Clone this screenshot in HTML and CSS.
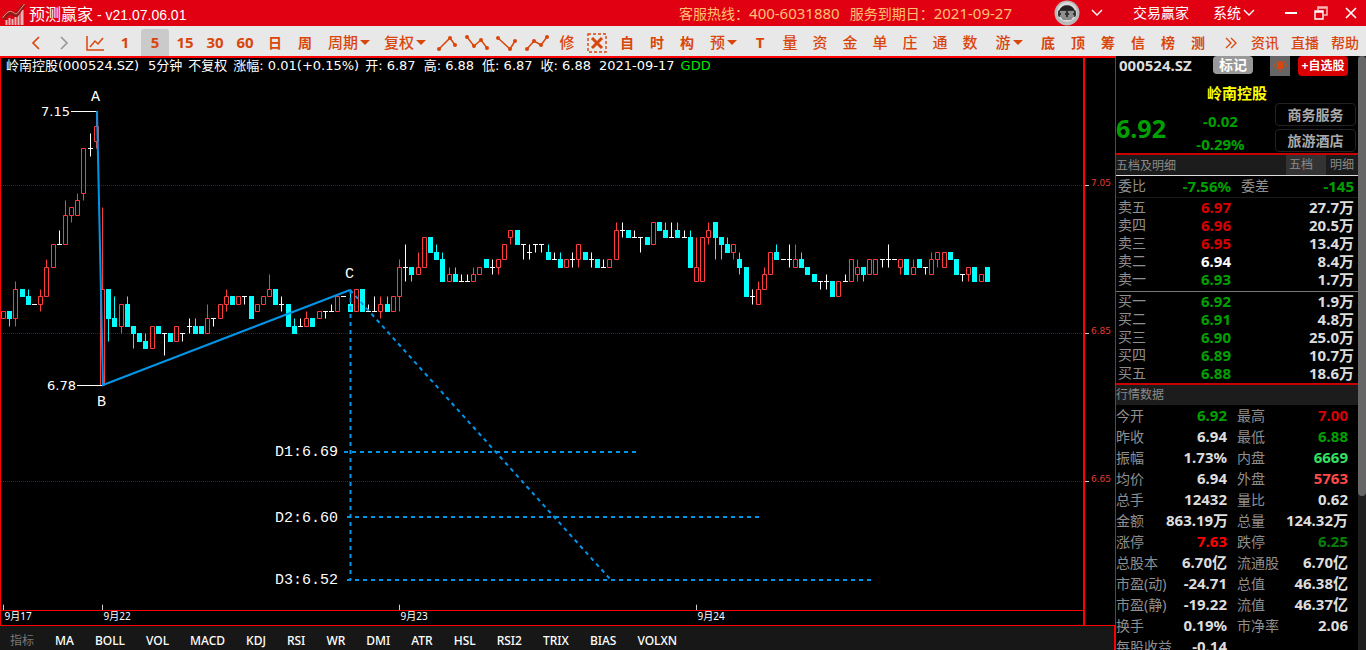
FILE: index.html
```html
<!DOCTYPE html>
<html lang="zh-CN">
<head>
<meta charset="utf-8">
<title>预测赢家</title>
<link rel="stylesheet" href="styles.css">
</head>
<body>
<div class="app">
<header class="titlebar">
  <svg class="logo" viewBox="0 0 24 26" aria-hidden="true">
    <g fill="#e9b7b7"><rect x="5" y="20" width="2" height="5"/><rect x="8" y="18" width="2" height="7"/><rect x="11" y="19" width="2" height="6"/><rect x="14" y="17" width="2" height="8"/><rect x="17" y="13" width="2" height="12"/><rect x="20" y="10" width="3" height="15"/></g>
    <path d="M3 19 Q8 11 11 13 T16 15 L23 5" fill="none" stroke="#8f1a1a" stroke-width="4"/>
    <path d="M2 18 Q8 9 12 12 T17 13 L24 4" fill="none" stroke="#ef8f86" stroke-width="1"/>
  </svg>
  <h1 class="title"><span class="title-name">预测赢家</span> - v21.07.06.01</h1>
  <p class="service"><span>客服热线：<b>400-6031880</b></span><span>服务到期日：<b>2021-09-27</b></span></p>
  <button class="avatar" aria-label="账户">
    <svg width="26" height="26" viewBox="0 0 26 26"><circle cx="13" cy="13" r="12.5" fill="#b9b9b9"/><circle cx="13" cy="12" r="10" fill="#d9d9d9"/><path d="M5 11a8.500 8.500 0 0 1 16 0z" fill="#222"/><path d="M6 16h14l-3 4H9z" fill="#888"/><rect x="4" y="10" width="18" height="7" rx="2" fill="#333"/><path d="M6 12h6M7 14h4M6 16h6M14 12h6M15 14h4M14 16h6" stroke="#eee"/></svg>
    <svg width="12" height="8" viewBox="0 0 12 8"><path d="M1 1l5 5 5-5" fill="none" stroke="#fff" stroke-width="1.4"/></svg>
  </button>
  <button class="sys trade">交易赢家</button>
  <button class="sys menu">系统<svg width="12" height="8" viewBox="0 0 12 8"><path d="M1 1l5 5 5-5" fill="none" stroke="#fff" stroke-width="1.4"/></svg></button>
  <div class="window-buttons">
    <button aria-label="最小化"><svg width="14" height="14" viewBox="0 0 14 14"><path d="M1 7h12" stroke="#fff" stroke-width="2"/></svg></button>
    <button aria-label="还原"><svg width="14" height="14" viewBox="0 0 14 14"><path d="M4 4V1h9v8h-3M4 2h9" fill="none" stroke="#f6b5b5" stroke-width="1.6"/><path d="M1 5h8v8H1zM1 6h8" fill="none" stroke="#fff" stroke-width="1.4"/></svg></button>
    <button aria-label="关闭"><svg width="14" height="14" viewBox="0 0 14 14"><path d="M2 2l10 10M12 2L2 12" stroke="#fff" stroke-width="1.6"/></svg></button>
  </div>
</header>

<nav class="toolbar">
  <button aria-label="后退"><svg width="12" height="16" viewBox="0 0 12 16"><path d="M10 2L4 8l6 6" fill="none" stroke="#d9460c" stroke-width="1.7"/></svg></button>
  <button aria-label="前进"><svg width="12" height="16" viewBox="0 0 12 16"><path d="M2 2l6 6-6 6" fill="none" stroke="#999" stroke-width="1.7"/></svg></button>
  <button aria-label="分时"><svg width="18" height="16" viewBox="0 0 18 16"><path d="M1 1v14h17M4 12l5-6 3 3 5-6" fill="none" stroke="#d9460c" stroke-width="1.5"/></svg></button>
  <button class="num">1</button>
  <button class="num active">5</button>
  <button class="num">15</button>
  <button class="num">30</button>
  <button class="num">60</button>
  <button class="strong">日</button>
  <button class="strong">周</button>
  <button class="period">周期<i class="caret"></i></button>
  <button class="adjust">复权<i class="caret"></i></button>
  <button aria-label="一笔反弹"><svg width="22" height="18" viewBox="0 0 22 18"><path d="M3 15L14 4l5 7" fill="none" stroke="#d9460c" stroke-width="1.5"/><g fill="#d9460c"><circle cx="3" cy="15" r="2"/><circle cx="14" cy="4" r="2"/><circle cx="19" cy="11" r="2"/></g></svg></button>
  <button aria-label="三笔下跌"><svg width="24" height="18" viewBox="0 0 24 18"><path d="M2 3l7 9 7-6 6 8" fill="none" stroke="#d9460c" stroke-width="1.5"/><g fill="#d9460c"><circle cx="2" cy="3" r="2"/><circle cx="9" cy="12" r="2"/><circle cx="16" cy="6" r="2"/><circle cx="22" cy="14" r="2"/></g></svg></button>
  <button aria-label="一笔回落"><svg width="22" height="18" viewBox="0 0 22 18"><path d="M2 4l12 11 5-8" fill="none" stroke="#d9460c" stroke-width="1.5"/><g fill="#d9460c"><circle cx="2" cy="4" r="2"/><circle cx="14" cy="15" r="2"/><circle cx="19" cy="7" r="2"/></g></svg></button>
  <button aria-label="三笔上涨"><svg width="24" height="18" viewBox="0 0 24 18"><path d="M2 15l7-8 7 4 6-8" fill="none" stroke="#d9460c" stroke-width="1.5"/><g fill="#d9460c"><circle cx="2" cy="15" r="2"/><circle cx="9" cy="7" r="2"/><circle cx="16" cy="11" r="2"/><circle cx="22" cy="3" r="2"/></g></svg></button>
  <button>修</button>
  <button aria-label="清除"><svg width="20" height="20" viewBox="0 0 20 20"><rect x="1" y="1" width="18" height="18" fill="none" stroke="#d9460c" stroke-width="1.4" stroke-dasharray="3 2"/><path d="M5 5l10 10M15 5L5 15" stroke="#d9460c" stroke-width="3"/></svg></button>
  <button class="strong">自</button>
  <button class="strong">时</button>
  <button class="strong">构</button>
  <button class="forecast">预<i class="caret"></i></button>
  <button class="num">T</button>
  <button>量</button>
  <button>资</button>
  <button>金</button>
  <button>单</button>
  <button>庄</button>
  <button>通</button>
  <button>数</button>
  <button class="hot">游<i class="caret"></i></button>
  <button class="strong">底</button>
  <button class="strong">顶</button>
  <button class="strong">筹</button>
  <button class="strong">信</button>
  <button class="strong">榜</button>
  <button class="strong">测</button>
  <button class="more" aria-label="更多"><svg width="12" height="12" viewBox="0 0 12 12"><path d="M1 1l5 5-5 5M6 1l5 5-5 5" fill="none" stroke="#d9460c" stroke-width="1.3"/></svg></button>
  <span class="links"><a href="#">资讯</a><a href="#">直播</a><a href="#">帮助</a></span>
</nav>

<main class="workspace">
  <div class="left">
    <section class="chart">
      <div class="plot-col">
        <div class="quote-line">
          <span class="wide">岭南控股(000524.SZ)</span><span>5分钟</span><span>不复权</span><span>涨幅: 0.01(+0.15%)</span><span class="field">开: 6.87</span><span class="field">高: 6.88</span><span class="field">低: 6.87</span><span class="field">收: 6.88</span><span>2021-09-17</span><span class="gdd">GDD</span>
        </div>
        <svg class="plot" id="plot" role="img" aria-label="5分钟K线图"></svg>
        <svg class="dates" id="dates"></svg>
      </div>
      <svg class="prices" id="prices"></svg>
    </section>
    <nav class="indicators">
      <span class="caption">指标</span>
      <button>MA</button><button>BOLL</button><button>VOL</button><button>MACD</button><button>KDJ</button><button>RSI</button><button>WR</button><button>DMI</button><button>ATR</button><button>HSL</button><button>RSI2</button><button>TRIX</button><button>BIAS</button><button>VOLXN</button>
    </nav>
  </div>

  <aside class="side">
    <div class="side-body">
      <div class="code-row">
        <strong class="code">000524.SZ</strong>
        <button class="mark">标记</button>
        <button class="bell" aria-label="提醒"><svg width="14" height="14" viewBox="0 0 14 14"><path d="M7 2c2 0 3 1 3 3v3l1 2H3l1-2V5c0-2 1-3 3-3z" fill="#d9460c"/><path d="M5.500 12h3M1 5v3M13 5v3M3 2L2 4M11 2l1 2" fill="none" stroke="#d9460c" stroke-width="1.2"/></svg></button>
        <button class="add">+自选股</button>
      </div>
      <h2 class="name">岭南控股</h2>
      <div class="summary">
        <strong class="last">6.92</strong>
        <div class="change"><b>-0.02</b><b>-0.29%</b></div>
        <div class="sectors"><button>商务服务</button><button>旅游酒店</button></div>
      </div>
      <div class="section tabs"><span>五档及明细</span><button class="on">五档</button><button>明细</button></div>
      <table class="ratio"><tr><th>委比</th><td class="green">-7.56%</td><th>委差</th><td class="green">-145</td></tr></table>
      <table class="orders">
        <tbody>
        <tr><th>卖五</th><td class="red">6.97</td><td>27.7万</td></tr>
        <tr><th>卖四</th><td class="red">6.96</td><td>20.5万</td></tr>
        <tr><th>卖三</th><td class="red">6.95</td><td>13.4万</td></tr>
        <tr><th>卖二</th><td class="white">6.94</td><td>8.4万</td></tr>
        <tr><th>卖一</th><td class="green">6.93</td><td>1.7万</td></tr>
        </tbody>
      </table>
      <table class="orders bids">
        <tbody>
        <tr><th>买一</th><td class="green">6.92</td><td>1.9万</td></tr>
        <tr><th>买二</th><td class="green">6.91</td><td>4.8万</td></tr>
        <tr><th>买三</th><td class="green">6.90</td><td>25.0万</td></tr>
        <tr><th>买四</th><td class="green">6.89</td><td>10.7万</td></tr>
        <tr><th>买五</th><td class="green">6.88</td><td>18.6万</td></tr>
        </tbody>
      </table>
      <div class="section data">行情数据</div>
      <table class="stats">
        <tr><th>今开</th><td class="green">6.92</td><th>最高</th><td class="red">7.00</td></tr>
        <tr><th>昨收</th><td>6.94</td><th>最低</th><td class="green">6.88</td></tr>
        <tr><th>振幅</th><td>1.73%</td><th>内盘</th><td class="lime">6669</td></tr>
        <tr><th>均价</th><td>6.94</td><th>外盘</th><td class="coral">5763</td></tr>
        <tr><th>总手</th><td>12432</td><th>量比</th><td>0.62</td></tr>
        <tr><th>金额</th><td>863.19万</td><th>总量</th><td>124.32万</td></tr>
        <tr><th>涨停</th><td class="bright">7.63</td><th>跌停</th><td class="dark">6.25</td></tr>
        <tr><th>总股本</th><td>6.70亿</td><th>流通股</th><td>6.70亿</td></tr>
        <tr><th>市盈(动)</th><td>-24.71</td><th>总值</th><td>46.38亿</td></tr>
        <tr><th>市盈(静)</th><td>-19.22</td><th>流值</th><td>46.37亿</td></tr>
        <tr><th>换手</th><td>0.19%</td><th>市净率</th><td>2.06</td></tr>
        <tr><th>每股收益</th><td>-0.14</td><th></th><td></td></tr>
      </table>
    </div>
    <div class="scroll"><div class="thumb"></div></div>
  </aside>
</main>
</div>
<script src="chart.js"></script>
</body>
</html>
```
FILE: styles.css
```css
* { box-sizing: border-box; }
body {
  margin: 0;
  background: #000;
  color: #fff;
  font-family: "Noto Sans", "Noto Sans CJK SC", sans-serif;
  font-size: 14px;
}
button {
  margin: 0;
  padding: 0;
  border: 0;
  background: none;
  color: inherit;
  font: inherit;
  white-space: nowrap;
}
svg { display: block; flex: none; }
.app { height: 100vh; display: flex; flex-direction: column; overflow: hidden; }

.titlebar {
  display: flex;
  align-items: center;
  flex: none;
  height: 26px;
  padding-right: 8px;
  background: #e10012;
}
.logo { width: 25px; height: 26px; margin-right: 4px; }
.title {
  margin: 0;
  padding-top: 4px;
  font: 400 14px/22px "Liberation Sans", "Noto Sans CJK SC", sans-serif;
  white-space: nowrap;
}
.title-name { font-size: 16px; }
.service {
  display: flex;
  gap: 10px;
  margin: 0 42px 0 auto;
  color: #ffc072;
  white-space: nowrap;
  line-height: 26px;
}
.service b { font-size: 15px; font-weight: 400; }
.avatar { display: flex; align-items: center; gap: 11px; margin-right: 30px; }
.sys { display: flex; align-items: center; line-height: 26px; }
.trade { margin-right: 24px; }
.menu { gap: 2px; margin-right: 29px; }
.window-buttons { display: flex; gap: 16px; }

.toolbar {
  display: flex;
  align-items: flex-end;
  gap: 2px;
  flex: none;
  height: 30px;
  padding: 0 7px 0 21px;
  background: #e8e8e8;
  color: #d9460c;
}
.toolbar button {
  display: flex;
  align-items: center;
  justify-content: center;
  flex: none;
  width: 28px;
  height: 27px;
  font-size: 15px;
  font-weight: 500;
  line-height: 27px;
}
.toolbar .num { font-weight: 700; }
.toolbar .strong { font-weight: 700; font-size: 14px; }
.toolbar .active { background: #cacaca; border-radius: 3px 3px 0 0; }
.toolbar .period { width: 56px; }
.toolbar .adjust { width: 52px; }
.toolbar .forecast { width: 41px; }
.toolbar .hot { width: 46px; }
.toolbar .more { width: 34px; }
.caret {
  margin-left: 2px;
  border: 5px solid transparent;
  border-top-color: #d9460c;
  border-bottom: 0;
}
.links { display: flex; gap: 12px; margin-left: auto; font-weight: 500; line-height: 27px; }
.links a { color: inherit; text-decoration: none; }

.workspace { display: flex; flex: 1; min-height: 0; }
.left {
  display: flex;
  flex-direction: column;
  flex: 1;
  min-width: 0;
  border-right: 1px solid #f00;
}
.chart {
  display: flex;
  flex: 1;
  min-height: 0;
  border: solid #f00;
  border-width: 2px 0 1px 1px;
}
.plot-col {
  display: flex;
  flex-direction: column;
  flex: 1;
  min-width: 0;
  border-right: 2px solid #f00;
}
.quote-line {
  display: flex;
  gap: 6px;
  flex: none;
  height: 18px;
  padding-left: 5px;
  font: 13px/16px "DejaVu Sans", "Noto Sans CJK SC", sans-serif;
  white-space: pre;
}
.quote-line .wide { margin-right: 3px; }
.quote-line .field { margin-right: 2px; }
.gdd { color: #00e600; }
.plot { width: 100%; flex: 1; min-height: 0; border-bottom: 1px solid #f00; }
.dates { width: 100%; height: 14px; overflow: visible; }
.prices { width: 30px; height: 100%; overflow: visible; }

.rise { fill: none; stroke: #ff3c3c; }
.fall { fill: #0ff; }
.fall-wick { fill: none; stroke: #0ff; }
.flat { fill: none; stroke: #fff; }
.grid { stroke: #8a0000; stroke-dasharray: 1 1; }
.tick { stroke: #ccc; }
.wave { fill: none; stroke: #0096e8; stroke-width: 2; }
.target { fill: none; stroke: #0096e8; stroke-width: 2; stroke-dasharray: 4 4; }
.price-text { fill: #fff; font: 13px "DejaVu Sans", sans-serif; }
.mono { fill: #fff; font: 15px "Liberation Mono", monospace; }
.axis-text { fill: #e03a32; font: 9px "DejaVu Sans", sans-serif; }
.date-text { fill: #fff; font: 10px "Noto Sans", "Noto Sans CJK SC", sans-serif; }

.indicators {
  display: flex;
  align-items: center;
  gap: 21px;
  flex: none;
  height: 24px;
  padding: 5px 0 0 10px;
  border-right: 1px solid #f00;
  background: #171717;
  font-size: 12px;
  font-weight: 500;
  line-height: 18px;
}
.caption { color: #777; font-weight: 400; }

.side { display: flex; flex: none; width: 250px; min-height: 0; }
.side-body { flex: 1; min-width: 0; overflow: hidden; }
.scroll { width: 8px; background: #1f1f1f; }
.thumb { height: 74%; border-radius: 4px; background: #666; }
.code-row { display: flex; align-items: flex-start; height: 20px; padding: 0 10px 0 3px; }
.code { flex: 1; color: #ddd; font-size: 15px; line-height: 18px; }
.mark {
  width: 40px;
  height: 18px;
  margin-right: 17px;
  border-radius: 4px;
  background: #999;
  font-weight: 700;
  line-height: 18px;
}
.bell {
  display: grid;
  place-items: center;
  width: 20px;
  height: 20px;
  margin-right: 8px;
  background: #666;
}
.add {
  width: 50px;
  height: 20px;
  border-radius: 4px;
  background: #d80000;
  font-size: 12px;
  font-weight: 700;
  line-height: 20px;
}
.name {
  margin: 8px 0 0;
  color: #ff0;
  font-size: 15px;
  line-height: 19px;
  text-align: center;
}
.summary { display: flex; height: 52px; border-bottom: 2px solid #c80000; }
.last { width: 80px; color: #00a000; font-size: 25px; line-height: 50px; }
.change {
  display: flex;
  flex-direction: column;
  align-items: center;
  padding-top: 7px;
  width: 49px;
  color: #00a000;
  font-size: 15px;
  line-height: 23px;
}
.sectors { display: flex; flex-direction: column; gap: 3px; margin: 0 2px 0 auto; }
.sectors button {
  width: 81px;
  height: 23px;
  border: 1px solid #222;
  border-radius: 4px;
  color: #aaa;
  font-weight: 700;
  line-height: 21px;
}
.section { background: #1c1c1c; color: #8a8a8a; font-size: 12px; line-height: 20px; }
.tabs { display: flex; height: 21px; border-bottom: 1px solid #ddd; }
.tabs span { flex: 1; line-height: 21px; }
.tabs button { width: 32px; line-height: 20px; }
.tabs .on { width: 40px; padding-right: 10px; background: #333; }
.data { height: 22px; margin-top: 1px; border-top: 2px solid #c80000; }

table { width: 100%; border-collapse: collapse; table-layout: fixed; }
th { padding: 0; color: #8f8f8f; font-weight: 400; text-align: left; white-space: nowrap; }
td { padding: 0; color: #ddd; font-size: 15px; font-weight: 700; text-align: right; white-space: nowrap; }
.ratio { border-bottom: 1px solid #1a1a1a; line-height: 20px; }
.ratio th { width: 34px; padding-left: 2px; }
.ratio th + td + th { width: 46px; padding-left: 10px; }
.ratio td:nth-child(2) { width: 81px; }
.ratio td:last-child, .orders td:last-child { padding-right: 4px; }
.ratio tr { height: 21px; }
.orders { line-height: 18px; }
.orders tr { height: 18px; }
.orders th { width: 34px; padding-left: 2px; }
.orders td:nth-child(2) { width: 81px; }
.orders td:last-child { width: auto; }
.bids { margin-top: 3px; border-top: 1px solid #777; }
.stats { line-height: 21px; }
.stats tr { height: 21px; }
.stats th { width: 50px; }
.stats td { width: 61px; }
.stats th:nth-child(3) { padding-left: 10px; width: 56px; }
.stats td:last-child { width: auto; padding-right: 10px; }
.green { color: #00a000; }
.red { color: #d80000; }
.white { color: #fff; }
.lime { color: #33e060; }
.coral { color: #ff4a4a; }
.bright { color: #f00; }
.dark { color: #078007; }
```
FILE: chart.js
```js
// One bar per 5 minutes: open, close, high, low in cents.
// High and low may be left out where they equal the body.
const bars = `687 688|688 687 688 686|687 691 692 686|691 690|690 689 691|689 689|689 690 691 688|690 694 695|694 697|697 697 699|697 701 703|701 702 702 700|701 703 704|704 710 710 703|710 710 712 709|711 713 715 710
678 691 702|691 687 691 684|687 686 690|686 689 689 685|689 686 690|686 685 686 683|685 684|684 683 685|683 686|686 685|685 685 685 682|685 684|684 686|685 685 685 684|686 686 687 685|686 685 687|686 685|685 687 689|687 687 687 686|687 689|689 690 691 688|690 689|689 690|690 690 690 689|690 687|688 689|689 690|690 691 693|691 689|689 689 690 688|689 686|686 685 687|686 686 687|686 687 688|687 686|687 688|688 688 688 687|688 688 689|688 690|690 690|689 688 691|688 691|691 688|688 688 689|688 688 690|688 689 690 687|689 688 690|688 690
690 694 695 688|694 694 697 692|694 693 694 692|693 694 696|694 698|698 696|696 695 697|695 692 696|692 693 694|693 692 694|692 692 693|692 692 693|692 693 694|693 694|695 694|694 694 695 693|694 695 695 693|695 697|698 699 699 697|699 697|697 697 697 695|696 696 697 695|697 697 697 696|697 697 697 696|696 695 697|695 695 696|695 694 696|694 695|695 695 696 694|695 697 697 694|696 695|695 695 696 694|695 694|694 694 695|694 695|695 699 700|699 699 700 698|699 698|698 698 699|698 698 698 696|698 697|697 700|700 699|699 698 700|698 698 700|699 698 700|698 698 699|698 694 699
692 694 698|692 698|698 699 700 697|700 698 700 695|698 697 698 695|697 696 698|696 697 697 695|695 694 696 693|694 690|690 690 691 689|689 691 692|691 693 694|693 696|696 695 697|695 695|695 695 697 694|694 695 697|695 694 696|694 693|693 692|692 692 692 691|692 692 693 691|692 690|690 692|692 692 693|692 695|693 694 695 692|694 693 694 692|693 695|693 695|695 695 695 694|695 695 697 694|695 695|694 695 695 693|695 693|693 694 695|695 694|694 694 694 693|693 695 696|695 696 696 694|694 696|696 695|695 693|693 693 693 692|693 694 694 692|694 692|692 693|694 692`
  .split(/[|\n]/).map(s => s.split(' ').map(Number));

const NS = 'http://www.w3.org/2000/svg';
function add(parent, tag, cls, attrs, text) {
  const el = document.createElementNS(NS, tag);
  el.setAttribute('class', cls);
  for (const k in attrs) el.setAttribute(k, attrs[k]);
  if (text) el.textContent = text;
  parent.appendChild(el);
}
const y = cents => Math.ceil(108.8 + (705 - cents) * 7.4) + 0.5;
const x = i => Math.floor(2.5 + i * 6.1875) + 0.5;

const plot = document.getElementById('plot');
const prices = document.getElementById('prices');
const dates = document.getElementById('dates');

for (const p of [705, 685, 665]) {
  add(plot, 'line', 'grid', { x1: 0, x2: '100%', y1: y(p), y2: y(p) });
  add(prices, 'line', 'tick', { x1: 0, x2: 4, y1: y(p) + 18, y2: y(p) + 18 });
  add(prices, 'text', 'axis-text', { x: 6, y: y(p) + 18 }, (p / 100).toFixed(2));
}
bars.forEach(([open, close, high, low], i) => {
  const cx = x(i);
  const top = y(Math.max(open, close));
  const bottom = y(Math.min(open, close));
  const hi = high ? y(high) : top;
  const lo = low ? y(low) : bottom;
  const wicks = `M${cx} ${hi}V${top}M${cx} ${bottom}V${lo}`;
  if (close > open) {
    add(plot, 'path', 'rise', { d: `${wicks}M${cx - 2} ${top}h4V${bottom}h-4z` });
  } else if (close < open) {
    add(plot, 'path', 'fall-wick', { d: wicks });
    add(plot, 'rect', 'fall', { x: cx - 2.5, y: top - 0.5, width: 5, height: bottom - top + 1 });
  } else {
    add(plot, 'path', 'flat', { d: `${wicks}M${cx - 2.5} ${top}h5` });
  }
});

// Wave A-B-C and its projected targets
add(plot, 'path', 'flat', { d: 'M70 35.5H96M76 309.5H102' });
add(plot, 'path', 'wave', { d: 'M96 35L102 309L349 214' });
add(plot, 'path', 'target', { d: 'M349.5 214V504' });
add(plot, 'path', 'target', { d: 'M349 214L609 503' });
add(plot, 'path', 'target', { d: 'M343 376H635' });
add(plot, 'path', 'target', { d: 'M346 441H759' });
add(plot, 'path', 'target', { d: 'M346 504H871' });
add(plot, 'text', 'price-text', { x: 40, y: 40 }, '7.15');
add(plot, 'text', 'price-text', { x: 46, y: 314 }, '6.78');
add(plot, 'text', 'mono', { x: 90, y: 25 }, 'A');
add(plot, 'text', 'mono', { x: 96, y: 330 }, 'B');
add(plot, 'text', 'mono', { x: 344, y: 202 }, 'C');
add(plot, 'text', 'mono', { x: 274, y: 380 }, 'D1:6.69');
add(plot, 'text', 'mono', { x: 274, y: 446 }, 'D2:6.60');
add(plot, 'text', 'mono', { x: 274, y: 508 }, 'D3:6.52');

for (const [i, day] of [[0, '9月17'], [16, '9月22'], [64, '9月23'], [112, '9月24']]) {
  add(plot, 'line', 'tick', { x1: x(i), x2: x(i), y1: '100%', y2: '99%' });
  add(dates, 'text', 'date-text', { x: x(i) + 1, y: 9 }, day);
}
```
